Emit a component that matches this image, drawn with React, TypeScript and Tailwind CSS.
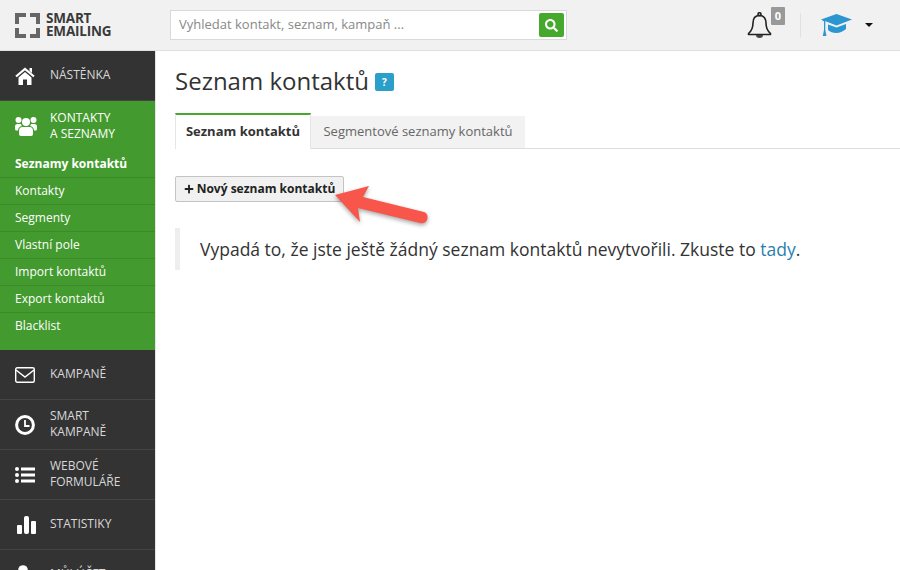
import { FaPlus, FaSearch } from 'react-icons/fa';
import type { ReactNode } from 'react';

const subItems = ['Kontakty', 'Segmenty', 'Vlastní pole', 'Import kontaktů', 'Export kontaktů', 'Blacklist'];

function HomeIcon() {
  return (
    <svg width="20" height="18" viewBox="0 0 20 18" fill="white">
      <path d="M1 9.5 L10 2 L19 9.5" fill="none" stroke="white" strokeWidth="2.2" />
      <path d="M14.5 1h2.5v5l-2.5-2z" />
      <path d="M3.5 10.5 L10 5 L16.5 10.5 V18 H12 V12.5 H8 V18 H3.5 Z" />
    </svg>
  );
}

function UsersIcon() {
  return (
    <svg width="22" height="20" viewBox="0 0 22 20" fill="white">
      <circle cx="11" cy="6" r="4" />
      <circle cx="3.5" cy="4" r="3" />
      <circle cx="18.5" cy="4" r="3" />
      <path d="M7.5 11 H14.5 Q18 11 18 15 V18 Q18 20 16 20 H6 Q4 20 4 18 V15 Q4 11 7.5 11 Z" />
      <path d="M0 13 V10.5 Q0 8 2.5 8 H6 Q6.2 9.3 7 10 Q3.2 10.6 3 14.5 H1.5 Q0 14.5 0 13 Z" />
      <path d="M22 13 V10.5 Q22 8 19.5 8 H16 Q15.8 9.3 15 10 Q18.8 10.6 19 14.5 H20.5 Q22 14.5 22 13 Z" />
    </svg>
  );
}

function EnvelopeIcon() {
  return (
    <svg width="20" height="16" viewBox="0 0 20 16" fill="none" stroke="white" strokeWidth="1.4">
      <rect x="0.7" y="0.7" width="18.6" height="14.6" rx="1.5" />
      <path d="M1 3 L10 10 L19 3" />
    </svg>
  );
}

function ClockIcon() {
  return (
    <svg width="20" height="20" viewBox="0 0 20 20" fill="none" stroke="white">
      <circle cx="10" cy="10" r="8.4" strokeWidth="3" />
      <path d="M10 5 V11 H14.5" strokeWidth="1.8" />
    </svg>
  );
}

function ListIcon() {
  return (
    <svg width="20" height="16" viewBox="0 0 20 16" fill="white">
      <circle cx="2" cy="2" r="2" />
      <circle cx="2" cy="8" r="2" />
      <circle cx="2" cy="14" r="2" />
      <rect x="6" y="0.5" width="14" height="3" />
      <rect x="6" y="6.5" width="14" height="3" />
      <rect x="6" y="12.5" width="14" height="3" />
    </svg>
  );
}

function BarsIcon() {
  return (
    <svg width="19" height="18" viewBox="0 0 19 18" fill="white" className="ml-[2px]">
      <rect x="0" y="9" width="5" height="9" rx="1" />
      <rect x="7" y="0" width="5" height="18" rx="2" />
      <rect x="14" y="5" width="5" height="13" rx="1" />
    </svg>
  );
}

function PersonIcon() {
  return (
    <svg width="18" height="20" viewBox="0 0 18 20" fill="white">
      <circle cx="8" cy="5" r="4.8" />
      <path d="M1 19 V14 Q1 10 5 10 H11 Q15 10 15 14 V19 Z" />
    </svg>
  );
}

function BellIcon() {
  return (
    <svg width="25" height="26" viewBox="0 0 25 26" fill="none" stroke="#222222" strokeWidth="1.6">
      <circle cx="12.5" cy="2.2" r="1.5" />
      <path d="M12.5 3.5 C7.5 3.5 6 7.5 6 11 C6 16 4.5 19 1.5 21.5 V22.5 H23.5 V21.5 C20.5 19 19 16 19 11 C19 7.5 17.5 3.5 12.5 3.5 Z" strokeLinejoin="round" />
      <path d="M9 23 A3.5 3 0 0 0 16 23 Z" fill="#444444" stroke="none" />
    </svg>
  );
}

function CapIcon() {
  return (
    <svg width="31" height="22" viewBox="0 0 31 22" fill="#2b96cf">
      <path d="M15.5 0 L31 5.5 L15.5 11.5 L4 7 V8 L0 5.5 Z" />
      <path d="M7 10.5 L15.5 13.5 L25 10 V15 Q20 19 15.5 19 Q10 19 7 16 Z" />
      <path d="M3 6.5 H4.3 V16 L5.5 22 H1.8 L3 16 Z" />
    </svg>
  );
}

function NavRow({ icon, children }: { icon: ReactNode; children: ReactNode }) {
  return (
    <div className="flex h-[50px] shrink-0 items-center border-b border-[#444444] text-[#d8d8d8]">
      <div className="flex w-[50px] shrink-0 pl-[15px]">{icon}</div>
      <div className="mb-[2px] text-[12px] leading-[16px]">{children}</div>
    </div>
  );
}

function Logo() {
  return (
    <div className="flex items-center gap-[6px]">
      <svg width="25" height="25" viewBox="0 0 25 25" fill="#666666">
        <path d="M0 0h11v4H4v7H0z" />
        <path d="M15 0h10v11h-4V4h-6z" />
        <path d="M0 15h4v6h7v4H0z" />
        <path d="M21 15h4v10H15v-4h6z" />
      </svg>
      <div className="text-[13.5px] font-bold leading-[13px] tracking-[-0.2px] text-[#3a3a3a]">
        SMART
        <br />
        EMAILING
      </div>
    </div>
  );
}

export default function App() {
  return (
    <div className="relative flex h-[570px] w-[900px] flex-col overflow-hidden bg-white font-['Open_Sans',sans-serif] text-[#333333]">
      <header className="flex h-[51px] shrink-0 items-center border-b border-[#e0e0e0] bg-[#f1f1f1]">
        <div className="w-[170px] shrink-0 pl-[15px]">
          <Logo />
        </div>
        <div className="flex h-[30px] w-[397px] items-center justify-between border border-[#d9d9d9] bg-white pl-[8px] pr-[2px]">
          <span className="text-[13px] text-[#888888]">Vyhledat kontakt, seznam, kampaň ...</span>
          <div className="flex h-[24px] w-[25px] items-center justify-center rounded-[2px] bg-[#46a92e]">
            <FaSearch size={13} className="text-white" />
          </div>
        </div>
        <div className="ml-auto flex items-center">
          <div className="relative mr-[28px]">
            <BellIcon />
            <span className="absolute -right-[13px] -top-[5px] flex h-[18px] w-[14px] items-center justify-center rounded-[1px] bg-[#999999] text-[11px] font-bold text-white">
              0
            </span>
          </div>
          <div className="h-[24px] w-px bg-[#e0e0e0]" />
          <div className="ml-[20px]">
            <CapIcon />
          </div>
          <div className="ml-[13px] mr-[27px] h-0 w-0 border-x-[4px] border-t-[4px] border-x-transparent border-t-[#111111]" />
        </div>
      </header>

      <div className="flex min-h-0 flex-1">
        <aside className="flex w-[155px] shrink-0 flex-col overflow-hidden bg-[#333333]">
          <NavRow icon={<HomeIcon />}>NÁSTĚNKA</NavRow>
          <div className="h-[249px] shrink-0 bg-[#439a2e] text-white">
            <div className="flex h-[50px] items-center pb-[1px]">
              <div className="flex w-[50px] shrink-0 pl-[15px]">
                <UsersIcon />
              </div>
              <div className="text-[12px] leading-[16px]">
                KONTAKTY
                <br />A SEZNAMY
              </div>
            </div>
            <div className="flex h-[27px] items-center border-b border-[#3b8c28] pl-[15px] text-[12px] font-bold">
              Seznamy kontaktů
            </div>
            {subItems.map((item) => (
              <div
                key={item}
                className="flex h-[27px] items-center border-b border-[#3b8c28] pl-[15px] text-[12px] last:border-b-0 last:pb-[1px]"
              >
                {item}
              </div>
            ))}
          </div>
          <NavRow icon={<EnvelopeIcon />}>KAMPANĚ</NavRow>
          <NavRow icon={<ClockIcon />}>
            SMART
            <br />
            KAMPANĚ
          </NavRow>
          <NavRow icon={<ListIcon />}>
            WEBOVÉ
            <br />
            FORMULÁŘE
          </NavRow>
          <NavRow icon={<BarsIcon />}>STATISTIKY</NavRow>
          <NavRow icon={<PersonIcon />}>MŮJ ÚČET</NavRow>
        </aside>

        <main className="min-w-0 flex-1 border-l border-[#e4e4e4] pl-[19px]">
          <div className="flex items-center pt-[12px]">
            <h1 className="text-[24px] font-normal leading-[36px] text-[#333333]">Seznam kontaktů</h1>
            <span className="ml-[6px] mt-[2px] flex h-[18px] w-[19px] items-center justify-center rounded-[2px] bg-[#2a9fc9] text-[10px] font-bold text-white">
              ?
            </span>
          </div>
          <div className="mt-[14px] flex h-[36px] items-end border-b border-[#dddddd]">
            <div className="z-10 -mb-px flex h-[36px] w-[136px] items-center justify-center border-x border-t-2 border-x-[#e6e6e6] border-t-[#46a92e] bg-white text-[13px] font-bold">
              Seznam kontaktů
            </div>
            <div className="flex h-[32px] w-[214px] items-center justify-center bg-[#f2f2f2] text-[13px] text-[#666666]">
              Segmentové seznamy kontaktů
            </div>
          </div>
          <button className="mt-[27px] flex h-[26px] w-[169px] items-center justify-center gap-[3px] rounded-[2px] border border-[#c4c4c4] bg-[#f1f1f1] text-[12px] font-bold text-[#222222]">
            <FaPlus size={10} />
            Nový seznam kontaktů
          </button>
          <blockquote className="mt-[26px] flex h-[42px] items-center border-l-[5px] border-[#eeeeee] pl-[20px] text-[17.5px] text-[#333333]">
            <span>
              Vypadá to, že jste ještě žádný seznam kontaktů nevytvořili. Zkuste to{' '}
              <span className="text-[#2a7fb0]">tady</span>.
            </span>
          </blockquote>
        </main>
      </div>

      <svg width="100" height="50" viewBox="0 0 100 50" className="absolute left-[334px] top-[182px] drop-shadow-[0_2px_2px_rgba(0,0,0,0.35)]">
        <path fill="#f8564a" d="M1 13 L35 4 L29 15 L90 30 Q95 32 93 38 Q91 42 86 41 L24 26 L26 40 Z" />
      </svg>
    </div>
  );
}
